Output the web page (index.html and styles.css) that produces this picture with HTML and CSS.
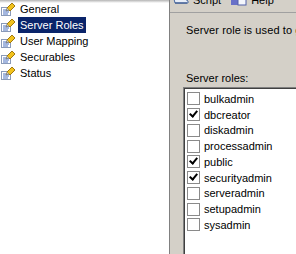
FILE: index.html
```html
<!DOCTYPE html>
<html lang="en">
<head>
    <meta charset="UTF-8">
    <title>Login Properties - Server Roles</title>
    <link rel="stylesheet" href="styles.css">
</head>
<body>
    <div class="window">
        <!-- Page selector -->
        <div class="nav">
            <div class="nav-item"><svg class="page-icon" viewBox="0 0 16 16"><use href="#pg"/></svg><span class="nav-label">General</span></div>
            <div class="nav-item selected"><svg class="page-icon" viewBox="0 0 16 16"><use href="#pg"/></svg><span class="nav-label">Server Roles</span></div>
            <div class="nav-item"><svg class="page-icon" viewBox="0 0 16 16"><use href="#pg"/></svg><span class="nav-label">User Mapping</span></div>
            <div class="nav-item"><svg class="page-icon" viewBox="0 0 16 16"><use href="#pg"/></svg><span class="nav-label">Securables</span></div>
            <div class="nav-item"><svg class="page-icon" viewBox="0 0 16 16"><use href="#pg"/></svg><span class="nav-label">Status</span></div>
        </div>

        <!-- Page content -->
        <div class="content">
            <div class="toolbar">
                <div class="tool">
                    <svg class="tool-icon" viewBox="0 0 18 12"><path d="M2 5h11l3 2v2H3z" fill="#e8eef8" stroke="#4a6aa0"/><path d="M3 9h12" stroke="#2c4c88"/></svg>
                    <span>Script</span>
                </div>
                <div class="tool help">
                    <svg class="tool-icon" viewBox="0 0 18 12"><rect x="1" y="3" width="7" height="8" fill="#6870c8"/><rect x="8" y="3" width="8" height="8" fill="#f4f6fc" stroke="#5060a8"/></svg>
                    <span>Help</span>
                </div>
            </div>

            <p class="desc">Server role is used to grant server-wide security privileges to a user.</p>

            <p class="list-caption">Server roles:</p>
            <div class="listbox">
                <div class="role"><span class="check"></span>bulkadmin</div>
                <div class="role"><span class="check on"></span>dbcreator</div>
                <div class="role"><span class="check"></span>diskadmin</div>
                <div class="role"><span class="check"></span>processadmin</div>
                <div class="role"><span class="check on"></span>public</div>
                <div class="role"><span class="check on"></span>securityadmin</div>
                <div class="role"><span class="check"></span>serveradmin</div>
                <div class="role"><span class="check"></span>setupadmin</div>
                <div class="role"><span class="check"></span>sysadmin</div>
            </div>
        </div>
    </div>

    <svg width="0" height="0" style="position:absolute">
        <defs>
            <g id="pg">
                <rect x="1.5" y="6.5" width="9" height="8" fill="#fff" stroke="#8a9ab8"/>
                <path d="M3 9h6M3 11h6M3 13h5" stroke="#4a70c0"/>
                <path d="M7 7l5-5 3 3-5 5z" fill="#f2c21c" stroke="#a07810"/>
                <path d="M7 7l-1 3 3-1" fill="#d8d0b0" stroke="#606060" stroke-width="0.6"/>
            </g>
        </defs>
    </svg>
</body>
</html>
```

FILE: styles.css
```css
body {
    margin: 0;
    font-family: 'Liberation Sans', Arial, sans-serif;
    font-size: 11px;
    color: #000;
}

.window {
    display: flex;
    width: 296px;
    height: 254px;
    overflow: hidden;
}

/* Page selector */
.nav {
    width: 169px;
    flex-shrink: 0;
    background: linear-gradient(#b4b4b4, #ffffff 3px);
    border-right: 1px solid #808080;
    padding-top: 1px;
}

.nav-item {
    display: flex;
    align-items: center;
    height: 16px;
}

.page-icon {
    width: 16px;
    height: 16px;
    flex-shrink: 0;
}

.nav-label {
    margin-left: 2px;
    padding: 0 2px;
    height: 16px;
    line-height: 16px;
}

.nav-item.selected .nav-label {
    background: #0a246a;
    color: #fff;
}

/* Page content */
.content {
    flex: 1;
    display: flex;
    flex-direction: column;
    background: #d4d0c8;
    min-width: 0;
}

.toolbar {
    height: 12px;
    border-bottom: 1px solid #a0a0a0;
    display: flex;
    align-items: flex-end;
    overflow: hidden;
    padding-left: 2px;
}

.tool {
    display: flex;
    align-items: center;
    gap: 3px;
    margin-bottom: 6px;
    white-space: nowrap;
}

.tool.help {
    margin-left: 9px;
}

.tool-icon {
    width: 18px;
    height: 12px;
}

.desc {
    margin: 11px 0 0 16px;
    line-height: 13px;
    white-space: nowrap;
    letter-spacing: 0.1px;
}

.list-caption {
    margin: 35px 0 0 16px;
    line-height: 13px;
}

.listbox {
    flex: 1;
    margin: 2px 0 0 13px;
    background: #fff;
    border-top: 1px solid #808080;
    border-left: 1px solid #808080;
    box-shadow: inset 1px 1px 0 #404040;
    padding: 3px 0 0 3px;
}

.role {
    display: flex;
    align-items: center;
    height: 15.75px;
    white-space: nowrap;
}

.check {
    width: 11px;
    height: 11px;
    border: 1px solid #8a8a8a;
    background: #fff;
    margin-right: 4px;
    position: relative;
}

.check.on::after {
    content: "";
    position: absolute;
    left: 3px;
    top: 0px;
    width: 3px;
    height: 6px;
    border-right: 2px solid #000;
    border-bottom: 2px solid #000;
    transform: rotate(40deg);
}
```
